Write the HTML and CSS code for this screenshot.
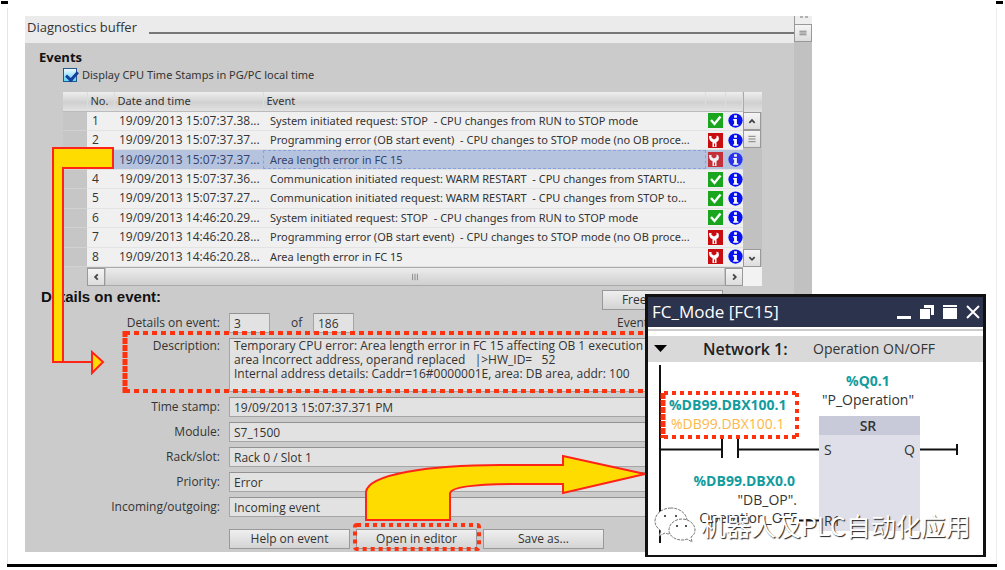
FILE: index.html
```html
<!DOCTYPE html>
<html lang="en">
<head>
<meta charset="utf-8">
<title>Diagnostics buffer</title>
<link rel="stylesheet" href="styles.css">
</head>
<body>
<svg class="defs" aria-hidden="true">
  <symbol id="ok" viewBox="0 0 15 15"><rect width="15" height="15" fill="#1aa51e"/><path d="M3 7l3.500 4L12.500 3.500" fill="none" stroke="#fff" stroke-width="2.400"/></symbol>
  <symbol id="err" viewBox="0 0 15 15"><rect width="15" height="15" fill="#c80c10"/><path d="M1 3C1 7 2.500 8.500 4.500 9v5h4V9C10.500 8.500 11.500 6.500 10.500 3.500L8.500 2.500V5L6 6.500 3.500 5V3z" fill="#fff"/><path d="M6.500 10.500v3" stroke="#c80c10"/></symbol>
  <symbol id="info" viewBox="0 0 16 16"><circle cx="8" cy="8" r="7.600" fill="#0710f0"/><path d="M6.500 2.500h3v2.500h-3zM5.500 6.500h4V12H11v1.500H5.500V12h1V8h-1z" fill="#fff"/></symbol>
</svg>
<main class="sheet">
  <section class="panel">
    <div class="content">
      <header class="panel-head"><h1>Diagnostics buffer</h1><span class="rule"></span></header>
      <div class="events">
        <h2>Events</h2>
        <label class="local-time"><input type="checkbox" checked>Display CPU Time Stamps in PG/PC local time</label>
        <div class="list">
          <table>
            <colgroup><col class="c-mark"><col class="c-no"><col class="c-date"><col><col class="c-state"><col class="c-info"></colgroup>
            <thead><tr><th></th><th>No.</th><th>Date and time</th><th>Event</th><th></th><th></th></tr></thead>
            <tbody>
              <tr><td></td><td>1</td><td>19/09/2013 15:07:37.38...</td><td>System initiated request: STOP &nbsp;- CPU changes from RUN to STOP mode</td><td><svg><use href="#ok"/></svg></td><td><svg><use href="#info"/></svg></td></tr>
              <tr><td></td><td>2</td><td>19/09/2013 15:07:37.37...</td><td>Programming error (OB start event) &nbsp;- CPU changes to STOP mode (no OB proce...</td><td><svg><use href="#err"/></svg></td><td><svg><use href="#info"/></svg></td></tr>
              <tr class="selected"><td></td><td></td><td>19/09/2013 15:07:37.37...</td><td>Area length error in FC 15</td><td><svg><use href="#err"/></svg></td><td><svg><use href="#info"/></svg></td></tr>
              <tr><td></td><td>4</td><td>19/09/2013 15:07:37.36...</td><td>Communication initiated request: WARM RESTART &nbsp;- CPU changes from STARTU...</td><td><svg><use href="#ok"/></svg></td><td><svg><use href="#info"/></svg></td></tr>
              <tr><td></td><td>5</td><td>19/09/2013 15:07:37.27...</td><td>Communication initiated request: WARM RESTART &nbsp;- CPU changes from STOP to...</td><td><svg><use href="#ok"/></svg></td><td><svg><use href="#info"/></svg></td></tr>
              <tr><td></td><td>6</td><td>19/09/2013 14:46:20.29...</td><td>System initiated request: STOP &nbsp;- CPU changes from RUN to STOP mode</td><td><svg><use href="#ok"/></svg></td><td><svg><use href="#info"/></svg></td></tr>
              <tr><td></td><td>7</td><td>19/09/2013 14:46:20.28...</td><td>Programming error (OB start event) &nbsp;- CPU changes to STOP mode (no OB proce...</td><td><svg><use href="#err"/></svg></td><td><svg><use href="#info"/></svg></td></tr>
              <tr><td></td><td>8</td><td>19/09/2013 14:46:20.28...</td><td>Area length error in FC 15</td><td><svg><use href="#err"/></svg></td><td><svg><use href="#info"/></svg></td></tr>
            </tbody>
          </table>
          <div class="vscroll">
            <span class="cap"></span>
            <button type="button" aria-label="Scroll up"><svg viewBox="0 0 18 18"><path d="M6 11l3-3 3 3"/></svg></button>
            <button type="button" aria-label="Scroll thumb"><svg viewBox="0 0 18 18"><path d="M5 6h8M5 9h8M5 12h8" class="grip"/></svg></button>
            <span class="track"></span>
            <button type="button" aria-label="Scroll down"><svg viewBox="0 0 18 18"><path d="M6 8l3 3 3-3"/></svg></button>
          </div>
          <div class="hscroll">
            <button type="button" aria-label="Scroll left"><svg viewBox="0 0 18 18"><path d="M11 6L8 9l3 3"/></svg></button>
            <span class="thumb"><svg viewBox="0 0 10 10"><path d="M2 1v8M5 1v8M8 1v8" class="grip"/></svg></span>
            <button type="button" aria-label="Scroll right"><svg viewBox="0 0 18 18"><path d="M8 6l3 3-3 3"/></svg></button>
          </div>
          <span class="corner"></span>
        </div>
      </div>
      <div class="details">
        <div class="details-head"><h2>Details on event:</h2><button type="button">Freeze display</button></div>
        <div class="form">
          <label for="num">Details on event:</label>
          <div class="count"><input id="num" value="3"><label for="total">of</label><input id="total" value="186" readonly><span class="event-id">Event ID:</span></div>
          <label for="desc" class="desc-label">Description:</label>
          <textarea id="desc" readonly>Temporary CPU error: Area length error in FC 15 affecting OB 1 execution read
area Incorrect address, operand replaced   |&gt;HW_ID=   52
Internal address details: Caddr=16#0000001E, area: DB area, addr: 100</textarea>
          <label for="stamp">Time stamp:</label><input id="stamp" value="19/09/2013 15:07:37.371 PM" readonly>
          <label for="module">Module:</label><input id="module" value="S7_1500" readonly>
          <label for="rack">Rack/slot:</label><input id="rack" value="Rack 0 / Slot 1" readonly>
          <label for="prio">Priority:</label><input id="prio" value="Error" readonly>
          <label for="inout">Incoming/outgoing:</label><input id="inout" value="Incoming event" readonly>
        </div>
        <div class="actions"><button type="button">Help on event</button><button type="button">Open in editor</button><button type="button">Save as...</button></div>
      </div>
    </div>
    <div class="panel-scroll"><span class="cut"><svg viewBox="0 0 18 8"><path d="M5 1h3M10 1h3" class="grip"/></svg></span><button type="button" aria-label="Scroll thumb"><svg viewBox="0 0 18 18"><path d="M5 7h8M5 9h8M5 11h8" class="grip"/></svg></button></div>
  </section>

  <svg class="marks" viewBox="0 0 660 570" aria-hidden="true">
    <path class="arrow" d="M53 148H113V168H63V362H92V352L103 362L92 373V362H53Z"/>
    <path class="arrow" d="M366 520V492C368 474 430 465 500 465H563V456L645 474L563 493V484H520C480 484 452 486 450 493V520Z"/>
    <path class="dots" d="M125 333H660M125 391H660"/>
    <path class="dots tight" d="M125 331V393"/>
    <rect class="dots small" x="355" y="525" width="124" height="24" rx="2"/>
  </svg>

  <section class="window">
    <header class="titlebar">
      <h2>FC_Mode [FC15]</h2>
      <button type="button" aria-label="Minimize"><svg viewBox="0 0 16 16"><path d="M1 12h14v3H1z"/></svg></button>
      <button type="button" aria-label="Restore"><svg viewBox="0 0 16 16"><path d="M1 5h10v10H1zM5 1h10v10h-3V4H5z"/></svg></button>
      <button type="button" aria-label="Maximize"><svg viewBox="0 0 16 16"><path d="M1 1h14v2H1zM1 4h14v11H1z"/></svg></button>
      <button type="button" aria-label="Close"><svg viewBox="0 0 16 16"><path d="M2 2l12 12M14 2L2 14" class="cross"/></svg></button>
    </header>
    <div class="network"><svg viewBox="0 0 14 8"><path d="M0 0h13L6.500 7z"/></svg><h3>Network 1:</h3><span>Operation ON/OFF</span></div>
    <svg class="ladder" viewBox="648 362 335 193">
      <g class="block"><rect x="819" y="416" width="101" height="115" class="body"/><rect x="819" y="416" width="101" height="19" class="top"/></g>
      <path class="wire" d="M660 365V543M660 449.500H721M738 449.500H819M920 449.500H957M722 439V458M738 439V458M957 444V455M799 520.500H819"/>
      <text class="addr" x="669" y="410">%DB99.DBX100.1</text>
      <text class="alt" x="671" y="429">%DB99.DBX100.1</text>
      <text class="addr" x="868" y="386" text-anchor="middle">%Q0.1</text>
      <text class="name" x="868" y="405" text-anchor="middle">"P_Operation"</text>
      <text class="kind" x="868" y="431" text-anchor="middle">SR</text>
      <text class="pin" x="824" y="455">S</text>
      <text class="pin" x="904" y="455">Q</text>
      <text class="pin" x="824" y="526">R1</text>
      <text class="addr" x="795" y="486" text-anchor="end">%DB99.DBX0.0</text>
      <text class="name" x="797" y="505" text-anchor="end">"DB_OP".</text>
      <text class="name" x="797" y="523" text-anchor="end">Operation_OFF</text>
      <path class="dots small" d="M664 393H797M797 393V437M664 437H797"/>
      <path class="dots tight" d="M663 393V438"/>
    </svg>
  </section>

  <div class="watermark">
    <svg viewBox="0 0 42 36"><g class="bubbles"><path d="M17 1C8 1 1 7 1 14c0 4 2 7 6 10l-2 5 6-3c2 1 4 1 6 1 9 0 16-6 16-13S26 1 17 1z"/><path d="M28 12c-7 0-13 5-13 11s6 10 13 10c2 0 3 0 5-1l5 3-1-5c3-2 4-4 4-7 0-6-6-11-13-11z"/></g><path class="eyes" d="M10 9h2M21 9h2M22 19h2M31 19h2"/></svg>
    <span>机器人及PLC自动化应用</span>
  </div>
</main>
</body>
</html>
```

FILE: styles.css
```css
* { box-sizing: border-box; }
body {
  margin: 0;
  background: #fff;
  color: #333;
  font: 12px/14px "Open Sans", "Noto Sans", sans-serif;
}
h1, h2, h3 { margin: 0; }
button, input, textarea { font: inherit; color: inherit; border-radius: 0; margin: 0; }
button { padding: 0; }
.defs { position: absolute; width: 0; height: 0; }

.sheet {
  position: relative;
  margin: 0 8px 0 7px;
  padding: 16px 178px 12px 18px;
  border-bottom: 3px solid #000;
  background:
    linear-gradient(#e4e4ee, #e4e4ee) 0 8px / 1px 100% no-repeat,
    linear-gradient(#ededed, #ededed) 100% 8px / 1px 100% no-repeat;
}
.sheet::before, .sheet::after {
  content: "";
  position: absolute;
  top: 1px;
  width: 7px;
  height: 3px;
  background: #000;
}
.sheet::before { left: -6px; }
.sheet::after { right: -6px; }

.panel { display: flex; background: #cbcbcb; margin-right: 7px; }
.content { flex: 1; min-width: 0; }
.panel-scroll { width: 18px; background: #c1c1c1; }
.cut { display: block; height: 8px; background: #eee; border-left: 1px solid #999; }
.cut svg { display: block; height: 8px; }
.panel-scroll button { display: block; width: 18px; height: 19px; }

.panel-head { display: flex; height: 27px; background: #ebebeb; padding-left: 2px; gap: 12px; }
.panel-head h1 { font-size: 13px; font-weight: 400; line-height: 22px; white-space: nowrap; }
.rule { flex: 1; height: 2px; margin-top: 16px; background: #777; }

.events { padding: 6px 32px 0 38px; }
.events h2 { margin-left: -24px; font-size: 13px; line-height: 16px; font-weight: 700; color: #111; }
.local-time { display: flex; align-items: center; gap: 5px; height: 20px; font: 11px/14px "Noto Sans", sans-serif; }
.local-time input {
  appearance: none;
  width: 14px;
  height: 14px;
  border: 1px solid #25588a;
  background: linear-gradient(#eef8ff, #5cd4f7);
  position: relative;
}
.local-time input:checked::after {
  content: "";
  position: absolute;
  left: 4px;
  top: 0;
  width: 5px;
  height: 9px;
  border: solid #173f9d;
  border-width: 0 3px 3px 0;
  transform: rotate(42deg);
}
.list { display: grid; grid-template-columns: 1fr 19px; margin-top: 7px; }
table { width: 100%; height: 175px; table-layout: fixed; border-collapse: collapse; }
.c-mark { width: 24px; }
.c-no { width: 27px; }
.c-date { width: 149px; }
.c-state { width: 20px; }
.c-info { width: 17px; }
th, .cap { background: linear-gradient(#eee, #d0d0d0 55%, #e2e2e2); }
th {
  height: 19px;
  padding: 0 3px;
  text-align: left;
  font: 11px/14px "Noto Sans", sans-serif;
  border-right: 1px solid #ddd;
  border-bottom: 1px solid #bbb;
}
td {
  padding: 0 0 0 5px;
  height: 19px;
  overflow: hidden;
  white-space: nowrap;
  background: #f0f0f0;
  border-bottom: 1px solid #e3e3e3;
}
td:nth-child(n+3) { padding-left: 5px; }
td:nth-child(4) { padding-left: 7px; font: 11px/14px "Noto Sans", sans-serif; }
td:first-child { background: #c6c6c6; border-color: #d2d2d2; }
td:nth-child(n+5) { padding: 0 0 0 2px; }
td svg { display: block; width: 15px; height: 15px; }
.selected td:nth-child(n+2) { background: #b5c3df; color: #33436b; }
.selected td:nth-child(4) { outline: 1px dashed #87a2de; outline-offset: -1px; }
.selected svg { opacity: .8; }

.vscroll { display: flex; flex-direction: column; background: #c1c1c1; }
.cap { height: 20px; border-left: 1px solid #aaa; }
.track { flex: 1; }
.vscroll button, .hscroll button, .panel-scroll button {
  width: 18px;
  height: 18px;
  border: 1px solid #999;
  background: linear-gradient(#f5f5f5, #ddd);
}
.vscroll button svg, .hscroll button svg, .panel-scroll button svg { display: block; width: 16px; height: 16px; }
.vscroll path, .hscroll path { fill: none; stroke: #444; stroke-width: 2; }
.vscroll .grip, .hscroll .grip, .grip { stroke: #777; stroke-width: 1; }
.hscroll { display: flex; height: 19px; margin-left: 24px; background: #c4c4c4; border: solid #aaa; border-width: 1px 0; }
.thumb { flex: 1; display: flex; align-items: center; justify-content: center; margin: 0 1px; background: linear-gradient(#ececec, #cfcfcf); }
.thumb svg { width: 10px; height: 8px; }
.corner { background: #f2f2f2; }

.details { padding: 4px 0 3px 16px; }
.details-head { display: flex; justify-content: space-between; padding-right: 71px; height: 23px; }
.details-head h2 { font: bold 15px/14px "Liberation Sans", sans-serif; color: #111; }
.details button { width: 121px; height: 20px; border: 1px solid #999; background: linear-gradient(#efefef, #d4d4d4); }
.details-head button { padding-right: 2px; }
.form { display: grid; grid-template-columns: 179px 1fr; column-gap: 9px; row-gap: 5px; padding-right: 71px; }
.form > label { text-align: right; line-height: 20px; }
.form input, .form textarea { border: 1px solid #a5a5a5; border-top-color: #929292; background: #e2e2e2; padding: 0 4px; height: 20px; min-width: 0; }
.form .desc-label { line-height: 16px; }
.form textarea { height: 54px; resize: none; white-space: pre; overflow: hidden; padding: 0 4px; }
.count { display: flex; }
.count input { width: 41px; }
.count label { width: 43px; line-height: 20px; padding-left: 21px; }
.event-id { margin-left: 263px; line-height: 20px; white-space: nowrap; }
.actions { display: flex; gap: 6px; padding: 12px 0 0 188px; }

.marks { position: absolute; left: -7px; top: 0; width: 660px; height: 570px; pointer-events: none; }
.arrow { fill: #ffdc00; stroke: #ff2418; stroke-width: 2; }
.dots { fill: none; stroke: #ff3210; stroke-width: 4; stroke-dasharray: 5 4; }
.dots.small { stroke-dasharray: 4 4; }
.dots.tight { stroke-width: 5; stroke-dasharray: 6 1; }

.window {
  position: absolute;
  left: 638px;
  top: 294px;
  width: 341px;
  border: 3px solid #111;
  border-bottom-width: 2px;
  background: #fff;
}
.titlebar { display: flex; align-items: center; gap: 7px; height: 30px; padding: 0 2px 0 4px; background: #2b334d; color: #fff; }
.titlebar h2 { flex: 1; font-size: 17px; font-weight: 400; line-height: 28px; white-space: nowrap; }
.titlebar button { width: 16px; height: 16px; border: 0; background: none; }
.titlebar svg { display: block; fill: #fff; }
.titlebar .cross { stroke: #fff; stroke-width: 2; }
.network {
  display: flex;
  align-items: center;
  height: 26px;
  margin-top: 9px;
  padding-left: 6px;
  background: #d9d9d9;
  box-shadow: 0 -5px #fff, 0 -7px #ccc;
}
.network svg { width: 14px; height: 8px; }
.network h3 { width: 110px; margin-left: 35px; font-size: 16px; font-weight: 600; color: #222; }
.network span { font-size: 14px; }
.ladder { display: block; width: 100%; height: 193px; }
.ladder .body { fill: #dfdfe9; }
.ladder .top { fill: #c8cad9; }
.wire { fill: none; stroke: #111; stroke-width: 2; }
.ladder text { font-size: 14px; fill: #333; }
.ladder .addr { fill: #129c9e; font-weight: 700; }
.ladder .alt { fill: #fdb747; }
.ladder .kind { font-weight: 600; }

.watermark { position: absolute; left: 647px; top: 507px; display: flex; align-items: center; gap: 5px; }
.watermark svg { width: 42px; height: 36px; }
.bubbles { fill: #fff; stroke: #777; stroke-width: 1; stroke-dasharray: 3 1; }
.eyes { stroke: #555; stroke-width: 2; }
.watermark span {
  color: #fff;
  font: 25px/36px "Noto Sans CJK SC", sans-serif;
  text-shadow: 1px 1px 1px #222;
  white-space: nowrap;
}
```
